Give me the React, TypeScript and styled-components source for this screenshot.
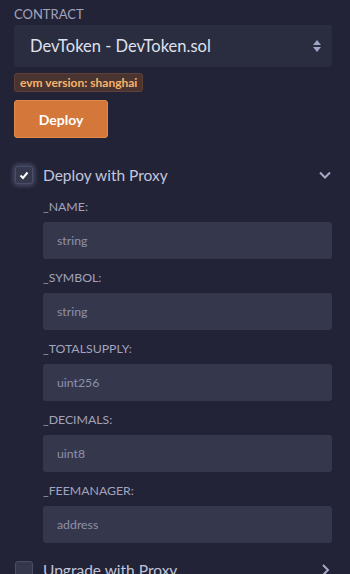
import React from "react";
import styled, { createGlobalStyle } from "styled-components";

const GlobalStyle = createGlobalStyle`
  html, body {
    margin: 0;
    padding: 0;
    background: #222336;
    font-family: "Lato", "Open Sans", sans-serif;
  }
`;

const Panel = styled.div`
  width: 350px;
  height: 574px;
  overflow: hidden;
  box-sizing: border-box;
  padding: 6px 18px 0 14px;
  background: #222336;
  color: #a2a3bd;
`;

const SectionLabel = styled.div`
  font-size: 13px;
  line-height: 16px;
  text-transform: uppercase;
  color: #a2a3bd;
`;

const Select = styled.div`
  margin-top: 3px;
  height: 42px;
  display: flex;
  align-items: center;
  justify-content: space-between;
  padding: 0 10px 0 16px;
  background: #2a2c3f;
  border-radius: 3px;
  font-size: 16.5px;
  color: #dfe1ee;
`;

const Badge = styled.span`
  align-self: flex-start;
  margin-top: 6px;
  padding: 1px 5px;
  background: #4a3431;
  border: 1px solid #5e4038;
  border-radius: 3px;
  font-size: 12px;
  font-weight: 700;
  color: #f7b46b;
  line-height: 15px;
`;

const Column = styled.div`
  display: flex;
  flex-direction: column;
`;

const DeployButton = styled.button`
  align-self: flex-start;
  margin-top: 8px;
  width: 94px;
  height: 38px;
  background: #d3773a;
  border: 1px solid #e08a4a;
  border-radius: 3px;
  color: #fff;
  font-family: inherit;
  font-size: 14px;
  font-weight: 700;
`;

const ProxyRow = styled.div<{ $top: number }>`
  margin-top: ${(p) => p.$top}px;
  display: flex;
  align-items: center;
  gap: 10px;
`;

const Box = styled.span<{ $checked?: boolean }>`
  width: 16px;
  height: 16px;
  flex: none;
  margin-left: 1px;
  border-radius: 3px;
  background: #35384c;
  border: 1px solid #4a4e68;
  display: flex;
  align-items: center;
  justify-content: center;
  box-shadow: ${(p) => (p.$checked ? "0 0 4px 2px rgba(140,145,190,0.35)" : "none")};
`;

const ProxyLabel = styled.span`
  flex: 1;
  font-size: 15.5px;
  color: #c3c6dc;
`;

const Fields = styled.div`
  padding-left: 29px;
  padding-top: 14px;
  display: flex;
  flex-direction: column;
`;

const FieldLabel = styled.div`
  font-size: 12.3px;
  line-height: 18px;
  color: #a2a3bd;
  margin-bottom: 6px;
`;

const Input = styled.div`
  height: 37px;
  display: flex;
  align-items: center;
  padding-left: 14px;
  background: #35384c;
  border-radius: 3px;
  font-size: 12.3px;
  color: #8d91ab;
  margin-bottom: 10px;
`;

const params = [
  ["_NAME:", "string"],
  ["_SYMBOL:", "string"],
  ["_TOTALSUPPLY:", "uint256"],
  ["_DECIMALS:", "uint8"],
  ["_FEEMANAGER:", "address"],
];

const SortArrows = () => (
  <svg width="10" height="16" viewBox="0 0 10 16">
    <path d="M5 2 L9 7 L1 7 Z" fill="#9fa5c4" />
    <path d="M1 9 L9 9 L5 14 Z" fill="#9fa5c4" />
  </svg>
);

const Chevron = ({ down }: { down: boolean }) => (
  <svg width="14" height="14" viewBox="0 0 14 14">
    <path
      d={down ? "M2 4.5 L7 9.5 L12 4.5" : "M5 2 L10 7 L5 12"}
      fill="none"
      stroke="#a6aac8"
      strokeWidth="2"
    />
  </svg>
);

const Check = () => (
  <svg width="10" height="9" viewBox="0 0 10 9">
    <path d="M1.5 4.5 L4 7 L8.5 1.5" fill="none" stroke="#fff" strokeWidth="2" />
  </svg>
);

export default function App() {
  return (
    <>
      <GlobalStyle />
      <Panel>
        <Column>
          <SectionLabel>Contract</SectionLabel>
          <Select>
            <span>DevToken - DevToken.sol</span>
            <SortArrows />
          </Select>
          <Badge>evm version: shanghai</Badge>
          <DeployButton>Deploy</DeployButton>
        </Column>
        <ProxyRow $top={28}>
          <Box $checked>
            <Check />
          </Box>
          <ProxyLabel>Deploy with Proxy</ProxyLabel>
          <Chevron down />
        </ProxyRow>
        <Fields>
          {params.map(([name, type]) => (
            <React.Fragment key={name}>
              <FieldLabel>{name}</FieldLabel>
              <Input>{type}</Input>
            </React.Fragment>
          ))}
        </Fields>
        <ProxyRow $top={8}>
          <Box />
          <ProxyLabel>Upgrade with Proxy</ProxyLabel>
          <Chevron down={false} />
        </ProxyRow>
      </Panel>
    </>
  );
}
